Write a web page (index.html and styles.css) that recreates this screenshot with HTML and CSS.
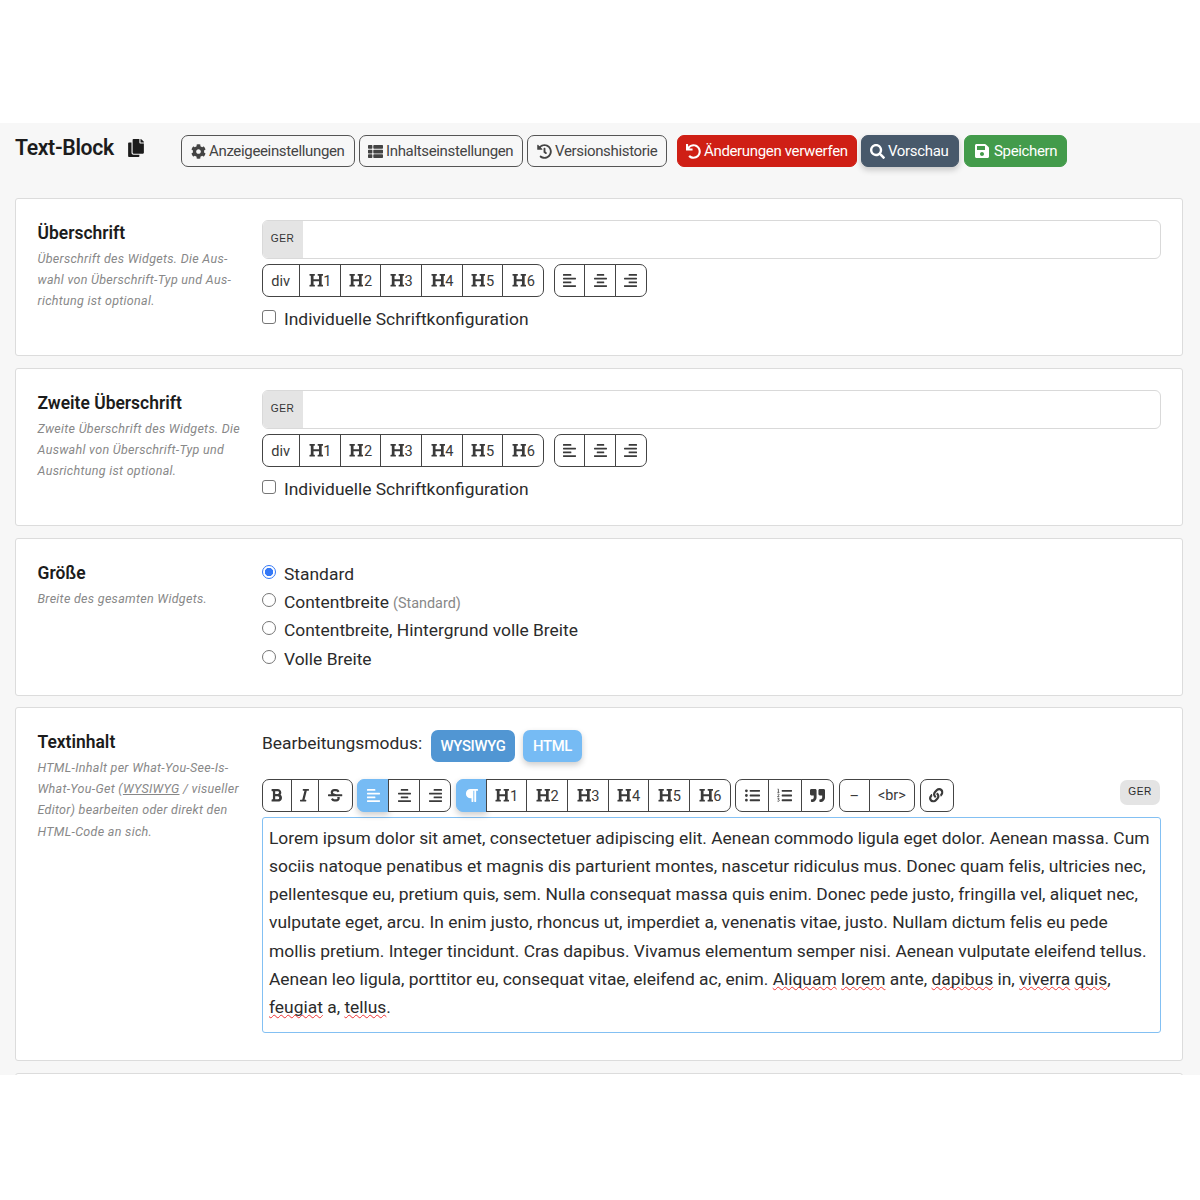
FILE: index.html
```html
<!DOCTYPE html>
<html lang="de">
<head>
<meta charset="utf-8">
<title>Text-Block</title>
<link rel="stylesheet" href="styles.css">
</head>
<body>
<svg class="sprite" aria-hidden="true">
  <symbol id="heading" viewBox="0 0 512 512"><path d="M448 96v320h32a16 16 0 0 1 16 16v32a16 16 0 0 1-16 16H320a16 16 0 0 1-16-16v-32a16 16 0 0 1 16-16h32V288H160v128h32a16 16 0 0 1 16 16v32a16 16 0 0 1-16 16H32a16 16 0 0 1-16-16v-32a16 16 0 0 1 16-16h32V96H32a16 16 0 0 1-16-16V48a16 16 0 0 1 16-16h160a16 16 0 0 1 16 16v32a16 16 0 0 1-16 16h-32v128h192V96h-32a16 16 0 0 1-16-16V48a16 16 0 0 1 16-16h160a16 16 0 0 1 16 16v32a16 16 0 0 1-16 16z"/></symbol>
  <symbol id="left" viewBox="0 0 448 512"><path d="M13 32h262a13 13 0 0 1 13 13v38a13 13 0 0 1-13 13H13A13 13 0 0 1 0 83V45a13 13 0 0 1 13-13zM13 288h262a13 13 0 0 1 13 13v38a13 13 0 0 1-13 13H13a13 13 0 0 1-13-13v-38a13 13 0 0 1 13-13zM16 160h416a16 16 0 0 1 16 16v32a16 16 0 0 1-16 16H16a16 16 0 0 1-16-16v-32a16 16 0 0 1 16-16zM16 416h416a16 16 0 0 1 16 16v32a16 16 0 0 1-16 16H16a16 16 0 0 1-16-16v-32a16 16 0 0 1 16-16z"/></symbol>
  <symbol id="center" viewBox="0 0 448 512"><path d="M109 32h230a13 13 0 0 1 13 13v38a13 13 0 0 1-13 13H109a13 13 0 0 1-13-13V45a13 13 0 0 1 13-13zM109 288h230a13 13 0 0 1 13 13v38a13 13 0 0 1-13 13H109a13 13 0 0 1-13-13v-38a13 13 0 0 1 13-13zM16 160h416a16 16 0 0 1 16 16v32a16 16 0 0 1-16 16H16a16 16 0 0 1-16-16v-32a16 16 0 0 1 16-16zM16 416h416a16 16 0 0 1 16 16v32a16 16 0 0 1-16 16H16a16 16 0 0 1-16-16v-32a16 16 0 0 1 16-16z"/></symbol>
  <symbol id="right" viewBox="0 0 448 512"><path d="M173 32h262a13 13 0 0 1 13 13v38a13 13 0 0 1-13 13H173a13 13 0 0 1-13-13V45a13 13 0 0 1 13-13zM173 288h262a13 13 0 0 1 13 13v38a13 13 0 0 1-13 13H173a13 13 0 0 1-13-13v-38a13 13 0 0 1 13-13zM16 160h416a16 16 0 0 1 16 16v32a16 16 0 0 1-16 16H16a16 16 0 0 1-16-16v-32a16 16 0 0 1 16-16zM16 416h416a16 16 0 0 1 16 16v32a16 16 0 0 1-16 16H16a16 16 0 0 1-16-16v-32a16 16 0 0 1 16-16z"/></symbol>
  <symbol id="copy" viewBox="0 0 448 512"><path d="M320 448v40c0 13.255-10.745 24-24 24H24c-13.255 0-24-10.745-24-24V120c0-13.255 10.745-24 24-24h72v296c0 30.879 25.121 56 56 56h168zm0-344V0H152c-13.255 0-24 10.745-24 24v368c0 13.255 10.745 24 24 24h272c13.255 0 24-10.745 24-24V128H344c-13.2 0-24-10.8-24-24zm120.971-31.029L375.029 7.029A24 24 0 0 0 358.059 0H352v96h96v-6.059a24 24 0 0 0-7.029-16.97z"/></symbol>
  <symbol id="cog" viewBox="0 0 512 512"><path d="M487.4 315.7l-42.600-24.600c4.300-23.200 4.300-47 0-70.200l42.600-24.600c4.900-2.800 7.100-8.600 5.500-14-11.100-35.600-30-67.800-54.700-94.600-3.800-4.100-10-5.100-14.800-2.300L380.800 110c-17.900-15.400-38.500-27.300-60.800-35.100V25.800c0-5.600-3.900-10.500-9.400-11.700-36.700-8.200-74.300-7.800-109.200 0-5.500 1.200-9.400 6.100-9.400 11.700V75c-22.200 7.900-42.800 19.800-60.800 35.100L88.700 85.500c-4.900-2.800-11-1.900-14.800 2.300-24.700 26.700-43.600 58.900-54.700 94.600-1.700 5.400.6 11.200 5.500 14L67.300 221c-4.300 23.200-4.300 47 0 70.200l-42.600 24.600c-4.900 2.800-7.100 8.600-5.500 14 11.100 35.600 30 67.800 54.700 94.600 3.800 4.100 10 5.100 14.800 2.300l42.600-24.600c17.900 15.400 38.500 27.300 60.800 35.100v49.200c0 5.600 3.900 10.500 9.400 11.700 36.700 8.200 74.300 7.800 109.200 0 5.500-1.200 9.400-6.100 9.400-11.700v-49.200c22.200-7.900 42.800-19.800 60.800-35.100l42.600 24.600c4.900 2.800 11 1.900 14.800-2.300 24.700-26.700 43.600-58.900 54.700-94.600 1.500-5.500-.7-11.300-5.600-14.100zM256 336c-44.100 0-80-35.900-80-80s35.900-80 80-80 80 35.900 80 80-35.900 80-80 80z"/></symbol>
  <symbol id="thlist" viewBox="0 0 512 512"><path d="M24 32h101a24 24 0 0 1 24 24v80a24 24 0 0 1-24 24H24a24 24 0 0 1-24-24V56a24 24 0 0 1 24-24zM205 32h283a24 24 0 0 1 24 24v80a24 24 0 0 1-24 24H205a24 24 0 0 1-24-24V56a24 24 0 0 1 24-24zM24 192h101a24 24 0 0 1 24 24v80a24 24 0 0 1-24 24H24a24 24 0 0 1-24-24v-80a24 24 0 0 1 24-24zM205 192h283a24 24 0 0 1 24 24v80a24 24 0 0 1-24 24H205a24 24 0 0 1-24-24v-80a24 24 0 0 1 24-24zM24 352h101a24 24 0 0 1 24 24v80a24 24 0 0 1-24 24H24a24 24 0 0 1-24-24v-80a24 24 0 0 1 24-24zM205 352h283a24 24 0 0 1 24 24v80a24 24 0 0 1-24 24H205a24 24 0 0 1-24-24v-80a24 24 0 0 1 24-24z"/></symbol>
  <symbol id="history" viewBox="0 0 512 512"><path d="M504 255.531c.253 136.640-111.180 248.372-247.820 248.468-59.015.042-113.223-20.530-155.822-54.911-11.077-8.940-11.905-25.541-1.839-35.607l11.267-11.267c8.609-8.609 22.353-9.551 31.891-1.984C173.062 425.135 212.781 440 256 440c101.705 0 184-82.311 184-184 0-101.705-82.311-184-184-184-48.814 0-93.149 18.969-126.068 49.932l50.754 50.754c10.080 10.080 2.941 27.314-11.313 27.314H24c-8.837 0-16-7.163-16-16V38.627c0-14.254 17.234-21.393 27.314-11.314l49.372 49.372C129.209 34.136 189.552 8 256 8c136.810 0 247.747 110.780 248 247.531zm-180.912 78.784l9.823-12.630c8.138-10.463 6.253-25.542-4.210-33.679L288 256.349V152c0-13.255-10.745-24-24-24h-16c-13.255 0-24 10.745-24 24v135.651l65.409 50.874c10.463 8.137 25.541 6.253 33.679-4.210z"/></symbol>
  <symbol id="undo" viewBox="0 0 512 512"><path d="M212.333 224.333H12c-6.627 0-12-5.373-12-12V12C0 5.373 5.373 0 12 0h48c6.627 0 12 5.373 12 12v78.112C117.773 39.279 184.260 7.470 258.175 8.007c136.906.994 246.448 111.623 246.157 248.532C504.041 393.258 393.120 504 256.333 504c-64.089 0-122.496-24.313-166.510-64.215-5.099-4.622-5.334-12.554-.467-17.420l33.967-33.967c4.474-4.474 11.662-4.717 16.401-.525C170.760 415.336 211.580 432 256.333 432c97.268 0 176-78.716 176-176 0-97.267-78.716-176-176-176-58.496 0-110.280 28.476-142.274 72.333h98.274c6.627 0 12 5.373 12 12v48c0 6.627-5.373 12-12 12z"/></symbol>
  <symbol id="search" viewBox="0 0 512 512"><path d="M505 442.700L405.300 343c-4.500-4.500-10.600-7-17-7H372c27.600-35.300 44-79.700 44-128C416 93.100 322.900 0 208 0S0 93.100 0 208s93.100 208 208 208c48.300 0 92.700-16.400 128-44v16.300c0 6.400 2.500 12.500 7 17l99.700 99.700c9.400 9.400 24.600 9.400 33.900 0l28.300-28.300c9.400-9.400 9.400-24.600.1-34zM208 336c-70.700 0-128-57.200-128-128 0-70.700 57.200-128 128-128 70.700 0 128 57.200 128 128 0 70.700-57.200 128-128 128z"/></symbol>
  <symbol id="save" viewBox="0 0 448 512"><path d="M433.941 129.941l-83.882-83.882A48 48 0 0 0 316.118 32H48C21.490 32 0 53.490 0 80v352c0 26.510 21.490 48 48 48h352c26.510 0 48-21.490 48-48V163.882a48 48 0 0 0-14.059-33.941zM224 416c-35.346 0-64-28.654-64-64 0-35.346 28.654-64 64-64s64 28.654 64 64c0 35.346-28.654 64-64 64zm96-304.520V212c0 6.627-5.373 12-12 12H76c-6.627 0-12-5.373-12-12V108c0-6.627 5.373-12 12-12h228.520c3.183 0 6.235 1.264 8.485 3.515l3.480 3.480A11.996 11.996 0 0 1 320 111.480z"/></symbol>
  <symbol id="bold" viewBox="0 0 384 512"><path d="M333.490 238a122 122 0 0 0 27-65.210C367.870 96.490 308 32 233.420 32H34a16 16 0 0 0-16 16v48a16 16 0 0 0 16 16h31.870v288H34a16 16 0 0 0-16 16v48a16 16 0 0 0 16 16h209.320c70.800 0 134.140-51.750 141-122.400 4.740-48.450-16.390-92.060-50.830-119.600zM145.660 112h87.760a48 48 0 0 1 0 96h-87.760zm87.760 288h-87.760V288h87.760a56 56 0 0 1 0 112z"/></symbol>
  <symbol id="italic" viewBox="0 0 320 512"><path d="M320 48v32a16 16 0 0 1-16 16h-62.760l-80 320H208a16 16 0 0 1 16 16v32a16 16 0 0 1-16 16H16a16 16 0 0 1-16-16v-32a16 16 0 0 1 16-16h62.760l80-320H112a16 16 0 0 1-16-16V48a16 16 0 0 1 16-16h192a16 16 0 0 1 16 16z"/></symbol>
  <symbol id="strike" viewBox="0 0 512 512"><path d="M496 224H293.900l-87.170-26.830A43.550 43.550 0 0 1 219.550 112h66.790A49.890 49.890 0 0 1 331 139.580a16 16 0 0 0 21.460 7.150l42.940-21.470a16 16 0 0 0 7.160-21.460l-.53-1A128 128 0 0 0 287.510 32h-68a123.680 123.680 0 0 0-123 135.640c2 20.890 10.100 39.830 21.780 56.360H16a16 16 0 0 0-16 16v32a16 16 0 0 0 16 16h480a16 16 0 0 0 16-16v-32a16 16 0 0 0-16-16zm-180.240 96A43 43 0 0 1 336 356.450 43.590 43.590 0 0 1 292.450 400h-66.790A49.890 49.890 0 0 1 181 372.420a16 16 0 0 0-21.460-7.150l-42.940 21.470a16 16 0 0 0-7.160 21.460l.53 1A128 128 0 0 0 224.490 480h68a123.680 123.680 0 0 0 123-135.640 114.250 114.250 0 0 0-5.340-24.360z"/></symbol>
  <symbol id="para" viewBox="0 0 448 512"><path d="M448 48v32a16 16 0 0 1-16 16h-48v368a16 16 0 0 1-16 16h-32a16 16 0 0 1-16-16V96h-32v368a16 16 0 0 1-16 16h-32a16 16 0 0 1-16-16V352h-32a160 160 0 0 1 0-320h240a16 16 0 0 1 16 16z"/></symbol>
  <symbol id="ul" viewBox="0 0 512 512"><path d="M48 48a48 48 0 1 0 48 48 48 48 0 0 0-48-48zm0 160a48 48 0 1 0 48 48 48 48 0 0 0-48-48zm0 160a48 48 0 1 0 48 48 48 48 0 0 0-48-48zm448 16H176a16 16 0 0 0-16 16v32a16 16 0 0 0 16 16h320a16 16 0 0 0 16-16v-32a16 16 0 0 0-16-16zm0-320H176a16 16 0 0 0-16 16v32a16 16 0 0 0 16 16h320a16 16 0 0 0 16-16V80a16 16 0 0 0-16-16zm0 160H176a16 16 0 0 0-16 16v32a16 16 0 0 0 16 16h320a16 16 0 0 0 16-16v-32a16 16 0 0 0-16-16z"/></symbol>
  <symbol id="ol" viewBox="0 0 512 512"><path d="M496 64H176a16 16 0 0 0-16 16v32a16 16 0 0 0 16 16h320a16 16 0 0 0 16-16V80a16 16 0 0 0-16-16zm0 160H176a16 16 0 0 0-16 16v32a16 16 0 0 0 16 16h320a16 16 0 0 0 16-16v-32a16 16 0 0 0-16-16zm0 160H176a16 16 0 0 0-16 16v32a16 16 0 0 0 16 16h320a16 16 0 0 0 16-16v-32a16 16 0 0 0-16-16z"/><path fill="none" stroke="currentColor" stroke-width="26" d="M20 38h28v110M14 150h68M18 212q55-20 52 15-5 22-52 65h62M16 350h55l-28 42q38-2 38 32-5 45-65 25"/></symbol>
  <symbol id="quote" viewBox="0 0 512 512"><path d="M464 32H336c-26.500 0-48 21.500-48 48v128c0 26.500 21.500 48 48 48h80v64c0 35.300-28.700 64-64 64h-8c-13.300 0-24 10.700-24 24v48c0 13.300 10.700 24 24 24h8c88.400 0 160-71.600 160-160V80c0-26.500-21.500-48-48-48zm-288 0H48C21.500 32 0 53.500 0 80v128c0 26.500 21.500 48 48 48h80v64c0 35.300-28.700 64-64 64h-8c-13.300 0-24 10.700-24 24v48c0 13.300 10.700 24 24 24h8c88.400 0 160-71.600 160-160V80c0-26.500-21.500-48-48-48z"/></symbol>
  <symbol id="link" viewBox="0 0 512 512"><path d="M326.612 185.391c59.747 59.809 58.927 155.698.36 214.590-.11.120-.24.250-.36.370l-67.200 67.200c-59.270 59.270-155.699 59.262-214.960 0-59.270-59.260-59.270-155.700 0-214.960l37.106-37.106c9.840-9.840 26.786-3.300 27.294 10.606.648 17.722 3.826 35.527 9.690 52.721 1.986 5.822.567 12.262-3.783 16.612l-13.087 13.087c-28.026 28.026-28.905 73.660-1.155 101.960 28.024 28.579 74.086 28.749 102.325.510l67.200-67.190c28.191-28.191 28.073-73.757 0-101.830-3.701-3.694-7.429-6.564-10.341-8.569a16.037 16.037 0 0 1-6.947-12.606c-.396-10.567 3.348-21.456 11.698-29.806l21.054-21.055c5.521-5.521 14.182-6.199 20.584-1.731a152.482 152.482 0 0 1 20.522 17.197zM467.547 44.449c-59.261-59.262-155.690-59.270-214.960 0l-67.200 67.200c-.12.120-.25.250-.36.370-58.566 58.892-59.387 154.781.36 214.590a152.454 152.454 0 0 0 20.521 17.196c6.402 4.468 15.064 3.789 20.584-1.731l21.054-21.055c8.350-8.350 12.094-19.239 11.698-29.806a16.037 16.037 0 0 0-6.947-12.606c-2.912-2.005-6.640-4.875-10.341-8.569-28.073-28.073-28.191-73.639 0-101.830l67.200-67.190c28.239-28.239 74.300-28.069 102.325.510 27.750 28.300 26.872 73.934-1.155 101.960l-13.087 13.087c-4.350 4.350-5.769 10.790-3.783 16.612 5.864 17.194 9.042 34.999 9.690 52.721.509 13.906 17.454 20.446 27.294 10.606l37.106-37.106c59.271-59.259 59.271-155.699.001-214.959z"/></symbol>
</svg>

<main class="page">
  <header class="head">
    <h1 class="title">Text-Block</h1>
    <svg class="copy"><use href="#copy"/></svg>
    <div class="actions">
      <button class="btn b-display"><svg><use href="#cog"/></svg>Anzeigeeinstellungen</button>
      <button class="btn b-content"><svg><use href="#thlist"/></svg>Inhaltseinstellungen</button>
      <button class="btn b-history"><svg><use href="#history"/></svg>Versionshistorie</button>
      <button class="btn b-discard"><svg><use href="#undo"/></svg>Änderungen verwerfen</button>
      <button class="btn b-preview"><svg><use href="#search"/></svg>Vorschau</button>
      <button class="btn b-save"><svg><use href="#save"/></svg>Speichern</button>
    </div>
  </header>

  <section class="card">
    <div class="label">
      <h2>Überschrift</h2>
      <p>Überschrift des Widgets. Die Aus-<br>wahl von Überschrift-Typ und Aus-<br>richtung ist optional.</p>
    </div>
    <div class="field">
      <div class="input"><span class="lang">GER</span></div>
      <div class="tools">
        <div class="group"><button class="w-div">div</button><button class="w-h"><svg><use href="#heading"/></svg>1</button><button class="w-h"><svg><use href="#heading"/></svg>2</button><button class="w-h"><svg><use href="#heading"/></svg>3</button><button class="w-h"><svg><use href="#heading"/></svg>4</button><button class="w-h"><svg><use href="#heading"/></svg>5</button><button class="w-h"><svg><use href="#heading"/></svg>6</button></div>
        <div class="group"><button class="w-al"><svg><use href="#left"/></svg></button><button class="w-al"><svg><use href="#center"/></svg></button><button class="w-al"><svg><use href="#right"/></svg></button></div>
      </div>
      <label class="opt check"><i class="box"></i>Individuelle Schriftkonfiguration</label>
    </div>
  </section>

  <section class="card">
    <div class="label">
      <h2>Zweite Überschrift</h2>
      <p>Zweite Überschrift des Widgets. Die<br>Auswahl von Überschrift-Typ und<br>Ausrichtung ist optional.</p>
    </div>
    <div class="field">
      <div class="input"><span class="lang">GER</span></div>
      <div class="tools">
        <div class="group"><button class="w-div">div</button><button class="w-h"><svg><use href="#heading"/></svg>1</button><button class="w-h"><svg><use href="#heading"/></svg>2</button><button class="w-h"><svg><use href="#heading"/></svg>3</button><button class="w-h"><svg><use href="#heading"/></svg>4</button><button class="w-h"><svg><use href="#heading"/></svg>5</button><button class="w-h"><svg><use href="#heading"/></svg>6</button></div>
        <div class="group"><button class="w-al"><svg><use href="#left"/></svg></button><button class="w-al"><svg><use href="#center"/></svg></button><button class="w-al"><svg><use href="#right"/></svg></button></div>
      </div>
      <label class="opt check"><i class="box"></i>Individuelle Schriftkonfiguration</label>
    </div>
  </section>

  <section class="card">
    <div class="label">
      <h2>Größe</h2>
      <p>Breite des gesamten Widgets.</p>
    </div>
    <div class="field">
      <label class="opt"><i class="radio on"></i>Standard</label>
      <label class="opt"><i class="radio"></i>Contentbreite<small>(Standard)</small></label>
      <label class="opt"><i class="radio"></i>Contentbreite, Hintergrund volle Breite</label>
      <label class="opt"><i class="radio"></i>Volle Breite</label>
    </div>
  </section>

  <section class="card tall">
    <div class="label">
      <h2>Textinhalt</h2>
      <p>HTML-Inhalt per What-You-See-Is-<br>What-You-Get (<u>WYSIWYG</u> / visueller<br>Editor) bearbeiten oder direkt den<br>HTML-Code an sich.</p>
    </div>
    <div class="field editor">
      <div class="mode"><span>Bearbeitungsmodus:</span><button class="mbtn cur">WYSIWYG</button><button class="mbtn">HTML</button></div>
      <div class="bar">
        <div class="group"><button class="w-b"><svg><use href="#bold"/></svg></button><button class="w-i"><svg><use href="#italic"/></svg></button><button class="w-s"><svg><use href="#strike"/></svg></button></div>
        <div class="group"><button class="w-al on"><svg><use href="#left"/></svg></button><button class="w-al"><svg><use href="#center"/></svg></button><button class="w-al"><svg><use href="#right"/></svg></button></div>
        <div class="group"><button class="w-p on"><svg><use href="#para"/></svg></button><button class="w-h"><svg><use href="#heading"/></svg>1</button><button class="w-h"><svg><use href="#heading"/></svg>2</button><button class="w-h"><svg><use href="#heading"/></svg>3</button><button class="w-h"><svg><use href="#heading"/></svg>4</button><button class="w-h"><svg><use href="#heading"/></svg>5</button><button class="w-h"><svg><use href="#heading"/></svg>6</button></div>
        <div class="group"><button class="w-l"><svg><use href="#ul"/></svg></button><button class="w-l"><svg><use href="#ol"/></svg></button><button class="w-l"><svg><use href="#quote"/></svg></button></div>
        <div class="group"><button class="w-hr">–</button><button class="w-br">&lt;br&gt;</button></div>
        <div class="group"><button class="w-link"><svg><use href="#link"/></svg></button></div>
        <span class="pill">GER</span>
      </div>
      <div class="text">Lorem ipsum dolor sit amet, consectetuer adipiscing elit. Aenean commodo ligula eget dolor. Aenean massa. Cum<br>sociis natoque penatibus et magnis dis parturient montes, nascetur ridiculus mus. Donec quam felis, ultricies nec,<br>pellentesque eu, pretium quis, sem. Nulla consequat massa quis enim. Donec pede justo, fringilla vel, aliquet nec,<br>vulputate eget, arcu. In enim justo, rhoncus ut, imperdiet a, venenatis vitae, justo. Nullam dictum felis eu pede<br>mollis pretium. Integer tincidunt. Cras dapibus. Vivamus elementum semper nisi. Aenean vulputate eleifend tellus.<br>Aenean leo ligula, porttitor eu, consequat vitae, eleifend ac, enim. <span class="sp">Aliquam</span> <span class="sp">lorem</span> ante, <span class="sp">dapibus</span> in, <span class="sp">viverra</span> <span class="sp">quis</span>,<br><span class="sp">feugiat</span> a, <span class="sp">tellus</span>.</div>
    </div>
  </section>

  <section class="card next"></section>
</main>
</body>
</html>
```
FILE: styles.css
```css
* { box-sizing: border-box; }
body { margin: 0; padding-top: 123px; background: #fff; font-family: Roboto, "Liberation Sans", sans-serif; font-size: 17.41px; color: #2b2b2b; }
.sprite { position: absolute; width: 0; height: 0; }
h1, h2, p { margin: 0; }
svg { fill: currentColor; display: block; flex: none; }
button { font-family: inherit; margin: 0; padding: 0; white-space: nowrap; }

.page { height: 952px; overflow: hidden; background: #f7f7f7; padding: 0 17px 0 15px; }
.head { display: flex; height: 75px; align-items: flex-start; }
.title { width: 113px; padding-top: 10px; font-size: 21.2px; line-height: 29px; font-weight: 600; letter-spacing: -.35px; color: #1c1c1c; white-space: nowrap; }
.copy { width: 16px; height: 18px; margin-top: 16px; color: #1c1c1c; }
.actions { display: flex; margin: 12px 0 0 37px; }
.btn { display: flex; align-items: center; height: 32px; border: 1px solid #555; border-radius: 7px; background: transparent; color: #444; font-size: 15px; letter-spacing: -.34px; padding-left: 9px; margin-right: 4px; }
.btn svg { width: 15px; height: 15px; margin-right: 3px; }
.b-display { width: 174px; }
.b-content { width: 164px; padding-left: 8px; }
.b-history { width: 140px; margin-right: 10px; padding-left: 9px; }
.b-discard { width: 180px; background: #cf1f15; border-color: #cf1f15; color: #fff; padding-left: 8px; }
.b-preview { width: 98px; background: #48596b; border-color: #48596b; color: #fff; padding-left: 8px; margin-right: 5px; box-shadow: 0 3px 6px rgba(0,0,0,.2); }
.b-save { width: 103px; background: #439b4b; border-color: #439b4b; color: #fff; margin: 0; }
.b-save svg { width: 14px; height: 16px; margin: 0 5px 0 1px; }

.card { display: flex; height: 158px; margin-bottom: 12px; padding: 21px 21px 0 21.500px; background: #fff; border: 1px solid #dcdcdc; border-radius: 3px; }
.card.tall { height: 354px; margin-top: -1px; }
.label { width: 224px; flex: none; padding-top: 2px; }
.label h2 { font-size: 17.45px; line-height: 23.500px; font-weight: 600; color: #1c1c1c; white-space: nowrap; }
.label p { margin-top: 2.500px; font-size: 12.5px; line-height: 21.2px; font-style: italic; letter-spacing: .3px; color: #888; white-space: nowrap; }
.field { width: 899.500px; flex: none; }
.input { height: 39px; border: 1px solid #d9d9d9; border-radius: 6px; overflow: hidden; }
.lang { display: block; width: 40px; height: 37px; line-height: 36px; background: #e4e4e4; text-align: center; font-family: "Liberation Sans", sans-serif; font-size: 10.2px; letter-spacing: .4px; color: #333; }
.tools { display: flex; gap: 9.5px; margin-top: 5px; }
.group { display: flex; }
.group button { display: flex; align-items: center; justify-content: center; height: 33px; border: 1px solid #444; margin-left: -1px; background: #fff; color: #3a3a3a; font-size: 14.6px; }
.group button:first-child { margin-left: 0; border-radius: 7px 0 0 7px; }
.group button:last-child { border-radius: 0 7px 7px 0; }
.group button:only-child { border-radius: 7px; }
.w-div { width: 38.500px; }
.w-h { width: 41.7px; letter-spacing: -.4px; }
.w-h svg { width: 14.5px; height: 14.5px; }
.w-al { width: 32px; }
.tools .w-al { width: 31.7px; }
.w-al svg { width: 13px; height: 15px; }
.opt { display: flex; align-items: center; height: 28.2px; white-space: nowrap; }
.check { margin-top: 7.5px; }
.box, .radio { width: 14px; height: 14px; margin: -3px 8.500px 0 0; border: 1px solid #767676; border-radius: 3px; background: #fff; flex: none; }
.radio { border-radius: 50%; margin-top: -4px; }
.radio.on { border-color: #3478f6; background: radial-gradient(circle, #3478f6 3.8px, #fff 4.5px); }
.opt small { font-size: 14.4px; color: #888; margin-left: 4px; padding-top: 2px; }

.mode { display: flex; height: 32px; margin-top: 1px; line-height: 27px; }
.mode span { width: 169.500px; padding-left: .5px; }
.mbtn { width: 84px; height: 32px; border: 0; border-radius: 7px; background: #76bbf4; color: #fff; font-size: 14.8px; letter-spacing: -.3px; font-weight: 500; margin-right: 8px; box-shadow: 0 3px 6px rgba(0,0,0,.2); }
.mbtn.cur { background: #5196d3; box-shadow: none; }
.mbtn:last-child { width: 59px; }
.bar { display: flex; gap: 4.6px; margin-top: 17px; height: 38px; }
.group button.on { background: #76bbf4; border-color: #76bbf4; color: #fff; box-shadow: 0 3px 6px rgba(0,0,0,.2); }
.w-b { width: 30px; }
.w-i { width: 28.500px; }
.w-s { width: 34.5px; }
.w-p { width: 31px; }
.w-l { width: 33.7px; }
.w-hr { width: 30.500px; }
.group .w-br { width: 46.500px; font-size: 14.4px; }
.w-link { width: 34px; }
.w-b svg { width: 11px; height: 14.5px; }
.w-i svg { width: 9px; height: 14.5px; }
.w-s svg, .w-link svg { width: 14.5px; height: 14.5px; }
.w-p svg { width: 13px; height: 15px; }
.w-l svg { width: 15px; height: 15px; }
.pill { width: 40px; height: 25px; margin: 1px 1px 0 auto; border-radius: 7px; background: #e4e4e4; text-align: center; font-family: "Liberation Sans", sans-serif; font-size: 10.2px; line-height: 23px; letter-spacing: .4px; }
.text { height: 216px; border: 1px solid #83c0f3; border-radius: 3px; padding: 5.500px 0 0 6.500px; line-height: 28.25px; white-space: nowrap; }
.sp { text-decoration: underline wavy #e33 1px; text-decoration-skip-ink: none; text-underline-offset: 1px; }
```
